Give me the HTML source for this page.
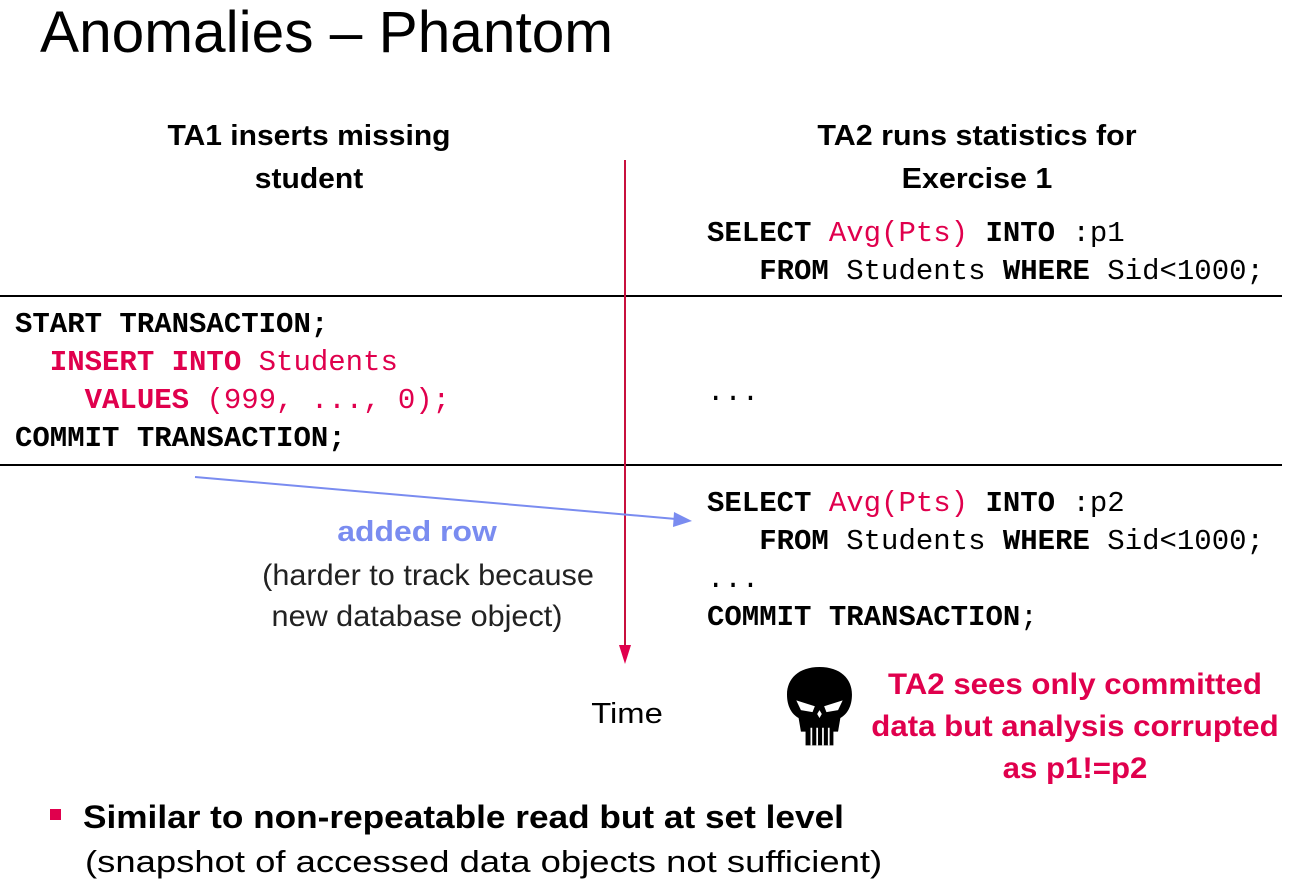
<!DOCTYPE html>
<html><head><meta charset="utf-8"><style>
body{margin:0;width:1306px;height:889px;background:#fff;position:relative;overflow:hidden;font-family:"Liberation Sans",sans-serif;color:#000}
.t{position:absolute;white-space:nowrap;line-height:1}
.c{transform:translateX(-50%) scaleX(var(--s,1));transform-origin:center}
.l{transform:scaleX(var(--s,1));transform-origin:left}
.m{position:absolute;white-space:nowrap;font-family:"Liberation Mono",monospace;font-size:29px;line-height:38px}
.b{font-weight:bold}
.r{color:#e0004d}
</style></head><body>
<div class="t l" style="left:40px;top:4px;font-size:58px;--s:1.01">Anomalies – Phantom</div>
<div class="t c b" style="left:309px;top:122px;font-size:29px;--s:1.035">TA1 inserts missing</div>
<div class="t c b" style="left:309px;top:165px;font-size:29px;--s:1.035">student</div>
<div class="t c b" style="left:977px;top:122px;font-size:29px;--s:1.05">TA2 runs statistics for</div>
<div class="t c b" style="left:977px;top:165px;font-size:29px;--s:1.05">Exercise 1</div>

<div class="m" style="left:707px;top:215px"><span class="b">SELECT</span> <span class="r">Avg(Pts)</span> <span class="b">INTO</span> :p1<br>&nbsp;&nbsp;&nbsp;<span class="b">FROM</span> Students <span class="b">WHERE</span> Sid&lt;1000;</div>
<div class="m b" style="left:15px;top:306px">START TRANSACTION;<br><span class="r">&nbsp;&nbsp;INSERT INTO <span style="font-weight:normal">Students</span></span><br><span class="r">&nbsp;&nbsp;&nbsp;&nbsp;VALUES <span style="font-weight:normal">(999, ..., 0);</span></span><br>COMMIT TRANSACTION;</div>
<div class="m" style="left:707px;top:374px">...</div>
<div class="m" style="left:707px;top:485px"><span class="b">SELECT</span> <span class="r">Avg(Pts)</span> <span class="b">INTO</span> :p2<br>&nbsp;&nbsp;&nbsp;<span class="b">FROM</span> Students <span class="b">WHERE</span> Sid&lt;1000;<br>...<br><span class="b">COMMIT TRANSACTION</span>;</div>

<svg style="position:absolute;left:0;top:0" width="1306" height="889">
<line x1="0" y1="296" x2="1282" y2="296" stroke="#000" stroke-width="2"/>
<line x1="0" y1="465" x2="1282" y2="465" stroke="#000" stroke-width="2"/>
<line x1="625" y1="160" x2="625" y2="648" stroke="#c8103e" stroke-width="2"/>
<polygon points="619,645 631,645 625,664" fill="#e0004d"/>
<line x1="195" y1="477" x2="676" y2="519" stroke="#7a8cf0" stroke-width="2"/>
<polygon points="674,512 692,521 673,527" fill="#7a8cf0"/>
<g transform="translate(787,667) scale(1.16,0.98)">
<path d="M28,0 C10,0 0,12 0,28 C0,40 4,48 10,52 L12,66 L16,66 L16,80 L40,80 L40,66 L44,66 L46,52 C52,48 56,40 56,28 C56,12 46,0 28,0Z" fill="#000"/>
<path d="M8,34 L24,40 L22,46 L12,44Z M48,34 L32,40 L34,46 L44,44Z" fill="#fff"/>
<path d="M26,48 L28,44 L30,48 L28,52Z" fill="#fff"/>
<path d="M21,62 v18 M26,62 v18 M31,62 v18 M36,62 v18" stroke="#fff" stroke-width="1.5"/>
</g>
</svg>

<div class="t c b" style="left:417px;top:518px;font-size:29px;color:#7a8cf0;--s:1.1">added row</div>
<div class="t c" style="left:428px;top:561px;font-size:30px;color:#222;--s:1.02">(harder to track because</div>
<div class="t c" style="left:417px;top:602px;font-size:30px;color:#222;--s:1.02">new database object)</div>
<div class="t c" style="left:627px;top:700px;font-size:29px;--s:1.13">Time</div>
<div class="t c b r" style="left:1075px;top:670px;font-size:30px;--s:1.04">TA2 sees only committed</div>
<div class="t c b r" style="left:1075px;top:712px;font-size:30px;--s:1.04">data but analysis corrupted</div>
<div class="t c b r" style="left:1075px;top:754px;font-size:30px;--s:1.04">as p1!=p2</div>
<div style="position:absolute;left:50px;top:809px;width:11px;height:11px;background:#e0004d"></div>
<div class="t l b" style="left:83px;top:801px;font-size:32px;--s:1.1">Similar to non-repeatable read but at set level</div>
<div class="t l" style="left:85px;top:846px;font-size:31px;--s:1.175">(snapshot of accessed data objects not sufficient)</div>
</body></html>
